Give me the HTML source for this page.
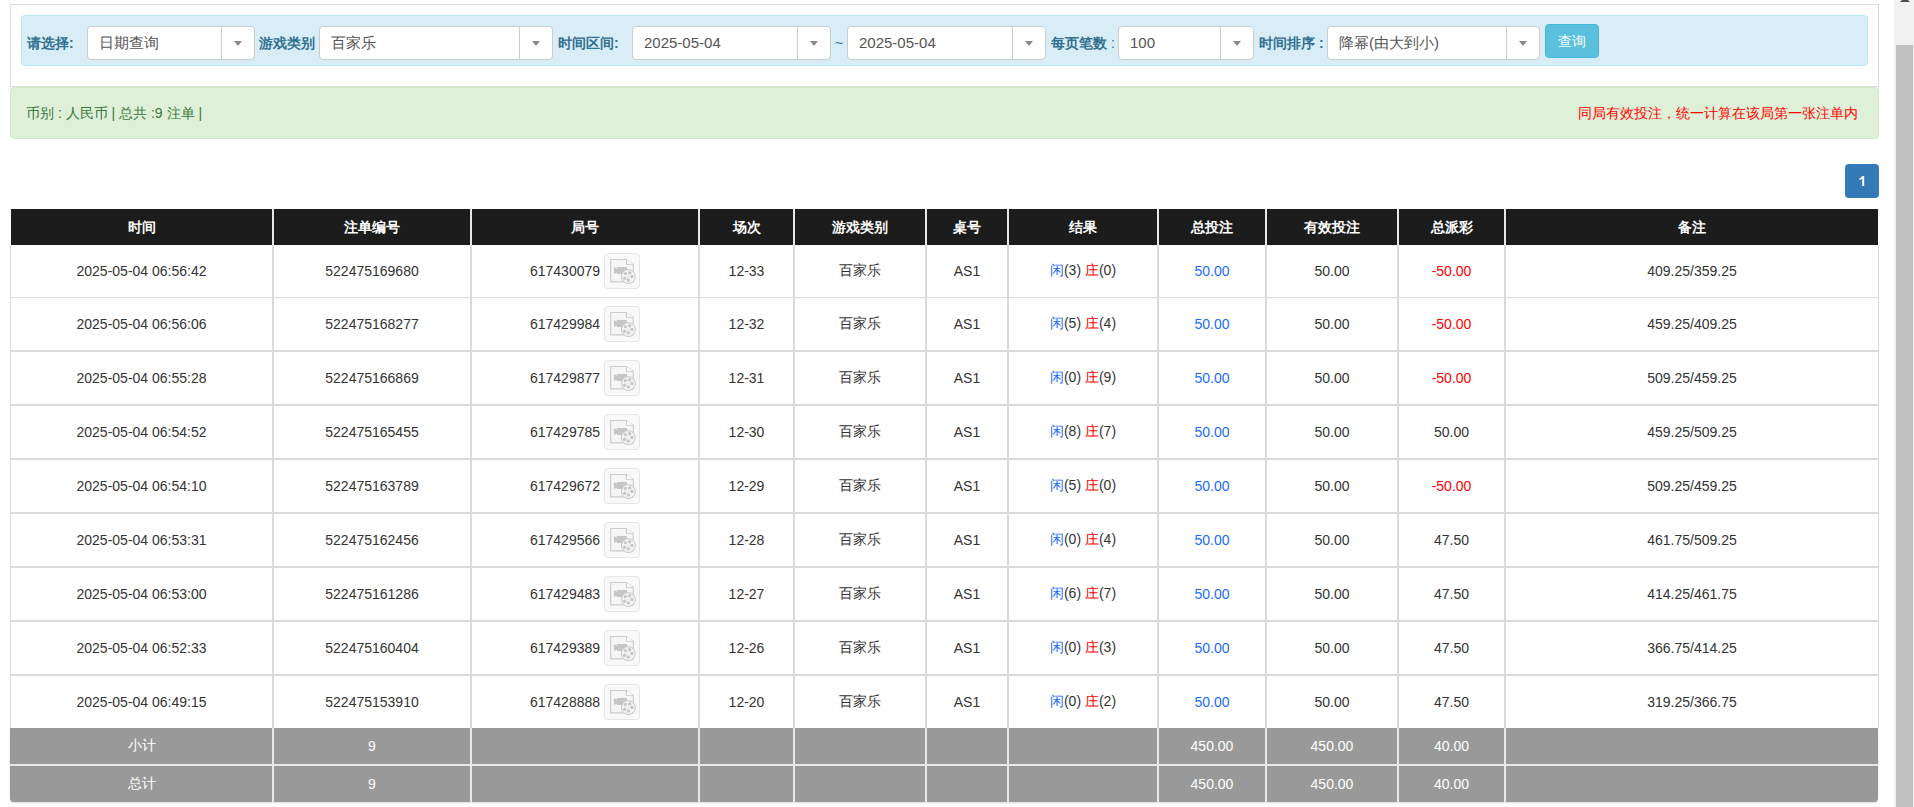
<!DOCTYPE html>
<html><head><meta charset="utf-8">
<style>
html,body{margin:0;padding:0;background:#fff;overflow:hidden}
body{width:1914px;height:807px;position:relative;font-family:"Liberation Sans",sans-serif;font-size:14px;color:#333}
.a{position:absolute;box-sizing:border-box}
.panel{left:10px;top:4px;width:1869px;height:83px;border:1px solid #dcdcdc;background:#fff}
.info{left:21px;top:15px;width:1847px;height:51px;background:#d9edf7;border:1px solid #bce8f1;border-radius:4px}
.succ{left:10px;top:87px;width:1869px;height:52px;background:#dff0d8;border:1px solid #d6e9c6;border-radius:4px}
.lbl{position:absolute;top:33px;line-height:20px;font-weight:bold;color:#31708f;white-space:nowrap}
.lbl i{font-style:normal;font-weight:normal}
.sel{position:absolute;top:26px;height:34px;box-sizing:border-box;background:#fff;border:1px solid #ccc;border-radius:4px;font-size:15px;color:#555;line-height:32px;padding-left:11px;white-space:nowrap}
.sel .dv{position:absolute;top:0;bottom:0;right:32px;width:1px;background:#ccc}
.sel .ar{position:absolute;top:14px;right:12px;width:0;height:0;border-left:4px solid transparent;border-right:4px solid transparent;border-top:5px solid #888}
.btn{position:absolute;left:1545px;top:24px;width:54px;height:34px;box-sizing:border-box;background:#5bc0de;border:1px solid #46b8da;border-radius:4px;color:#fff;text-align:center;line-height:32px;font-size:14px}
.msg{position:absolute;top:103px;line-height:20px;white-space:nowrap}
.pg{left:1845px;top:164px;width:34px;height:34px;background:#337ab7;border-radius:4px;color:#fff;text-align:center;line-height:34px;font-weight:normal}
.c{position:absolute;display:flex;align-items:center;justify-content:center;white-space:nowrap;box-sizing:border-box}
.h{color:#fff;font-weight:bold;padding-top:2px}
.f{color:#fff}
.hdr{position:absolute;background:#1c1c1c}
.ftr{position:absolute;background:#999;border-radius:0 0 4px 4px;box-shadow:0 1px 2px rgba(0,0,0,.15)}
.ln{position:absolute;background:#dadada}
.lnh{position:absolute;background:#e8e8e8}
.lnf{position:absolute;background:#e8e8e8}
.bl{color:#1a6cff}
.rd{color:#ff0000}
.jh{display:inline-flex;align-items:center;font-weight:normal}
.ic{display:block;width:36px;height:36px;margin-left:4px;box-sizing:border-box;border:1px solid #e6e6e6;border-radius:4px;background:#f9f9f9;position:relative}
.ic svg{position:absolute;left:-1px;top:-1px}
.sb{position:absolute;left:1894px;top:0;width:20px;height:807px;background:#f1f1f1}
.th{position:absolute;left:1896px;top:45px;width:17px;height:770px;background:#c1c1c1}
.up{position:absolute;left:1900px;top:-3px;width:0;height:0;border-left:5px solid transparent;border-right:5px solid transparent;border-bottom:5px solid #505050}
</style></head><body>
<div class="a panel"></div>
<div class="a info"></div>
<div class="lbl" style="left:27px">请选择:</div>
<div class="sel" style="left:87px;width:168px">日期查询<span class="dv"></span><span class="ar"></span></div>
<div class="lbl" style="left:259px">游戏类别</div>
<div class="sel" style="left:319px;width:234px">百家乐<span class="dv"></span><span class="ar"></span></div>
<div class="lbl" style="left:558px">时间区间:</div>
<div class="sel" style="left:632px;width:199px">2025-05-04<span class="dv"></span><span class="ar"></span></div>
<div class="lbl" style="left:835px;font-weight:normal">~</div>
<div class="sel" style="left:847px;width:199px">2025-05-04<span class="dv"></span><span class="ar"></span></div>
<div class="lbl" style="left:1051px">每页笔数<i> :</i></div>
<div class="sel" style="left:1118px;width:136px">100<span class="dv"></span><span class="ar"></span></div>
<div class="lbl" style="left:1259px">时间排序 :</div>
<div class="sel" style="left:1327px;width:213px">降幂(由大到小)<span class="dv"></span><span class="ar"></span></div>
<div class="btn">查询</div>
<div class="a succ"></div>
<div class="msg" style="left:26px;color:#3c763d">币别 : 人民币 | 总共 :9 注单 |</div>
<div class="msg" style="left:1578px;color:#ff0000">同局有效投注，统一计算在该局第一张注单内</div>
<div class="a pg"><svg style="position:absolute;left:14px;top:11px" width="8" height="12" viewBox="0 0 8 12"><path d="M3.2 1h2v10h-2V3.8Q2.2 4.6 0.4 5.1V3.6Q2.2 2.9 3.2 1Z" fill="#fff"/></svg></div>
<div class="hdr" style="left:11px;top:209px;width:1867px;height:36px"></div>
<div class="c h" style="left:11px;top:209px;width:261px;height:36px"><span>时间</span></div>
<div class="c h" style="left:274px;top:209px;width:196px;height:36px"><span>注单编号</span></div>
<div class="c h" style="left:472px;top:209px;width:226px;height:36px"><span>局号</span></div>
<div class="c h" style="left:700px;top:209px;width:93px;height:36px"><span>场次</span></div>
<div class="c h" style="left:795px;top:209px;width:130px;height:36px"><span>游戏类别</span></div>
<div class="c h" style="left:927px;top:209px;width:80px;height:36px"><span>桌号</span></div>
<div class="c h" style="left:1009px;top:209px;width:148px;height:36px"><span>结果</span></div>
<div class="c h" style="left:1159px;top:209px;width:106px;height:36px"><span>总投注</span></div>
<div class="c h" style="left:1267px;top:209px;width:130px;height:36px"><span>有效投注</span></div>
<div class="c h" style="left:1399px;top:209px;width:105px;height:36px"><span>总派彩</span></div>
<div class="c h" style="left:1506px;top:209px;width:372px;height:36px"><span>备注</span></div>
<div class="c b" style="left:11px;top:245px;width:261px;height:52px"><span>2025-05-04 06:56:42</span></div>
<div class="c b" style="left:274px;top:245px;width:196px;height:52px"><span>522475169680</span></div>
<div class="c b" style="left:472px;top:245px;width:226px;height:52px"><span><b class="jh">617430079<span class="ic"><svg width="36" height="36" viewBox="0 0 36 36"><path d="M6.7 6.5H22.4L29.3 11.5V28.9H6.7Z" fill="#f6f6f6" stroke="#cbcbcb" stroke-width="1.1"/><path d="M22.4 6.5V11.3H29.3" fill="#fff" stroke="#cbcbcb" stroke-width="1"/><path d="M10 14.2L12.9 15.4V14H23V20.1H18.3V21H12.9V19.6L10 21Z" fill="#c6c6c6"/><circle cx="24.35" cy="23.55" r="7" fill="#f4f4f4" stroke="#c8c8c8" stroke-width="1"/><circle cx="21.4" cy="20.6" r="1.7" fill="#c8c8c8"/><circle cx="25.7" cy="19.7" r="1.7" fill="#c8c8c8"/><circle cx="27.9" cy="23.5" r="1.7" fill="#c8c8c8"/><circle cx="24.3" cy="27" r="1.7" fill="#c8c8c8"/><circle cx="20.6" cy="25.2" r="1.7" fill="#c8c8c8"/><circle cx="23.9" cy="23.4" r=".5" fill="#c8c8c8"/></svg></span></b></span></div>
<div class="c b" style="left:700px;top:245px;width:93px;height:52px"><span>12-33</span></div>
<div class="c b" style="left:795px;top:245px;width:130px;height:52px"><span>百家乐</span></div>
<div class="c b" style="left:927px;top:245px;width:80px;height:52px"><span>AS1</span></div>
<div class="c b" style="left:1009px;top:245px;width:148px;height:52px"><span><span class="bl">闲</span>(3) <span class="rd">庄</span>(0)</span></div>
<div class="c b" style="left:1159px;top:245px;width:106px;height:52px"><span><span class="bl">50.00</span></span></div>
<div class="c b" style="left:1267px;top:245px;width:130px;height:52px"><span>50.00</span></div>
<div class="c b" style="left:1399px;top:245px;width:105px;height:52px"><span><span class="rd">-50.00</span></span></div>
<div class="c b" style="left:1506px;top:245px;width:372px;height:52px"><span>409.25/359.25</span></div>
<div class="c b" style="left:11px;top:298px;width:261px;height:52px"><span>2025-05-04 06:56:06</span></div>
<div class="c b" style="left:274px;top:298px;width:196px;height:52px"><span>522475168277</span></div>
<div class="c b" style="left:472px;top:298px;width:226px;height:52px"><span><b class="jh">617429984<span class="ic"><svg width="36" height="36" viewBox="0 0 36 36"><path d="M6.7 6.5H22.4L29.3 11.5V28.9H6.7Z" fill="#f6f6f6" stroke="#cbcbcb" stroke-width="1.1"/><path d="M22.4 6.5V11.3H29.3" fill="#fff" stroke="#cbcbcb" stroke-width="1"/><path d="M10 14.2L12.9 15.4V14H23V20.1H18.3V21H12.9V19.6L10 21Z" fill="#c6c6c6"/><circle cx="24.35" cy="23.55" r="7" fill="#f4f4f4" stroke="#c8c8c8" stroke-width="1"/><circle cx="21.4" cy="20.6" r="1.7" fill="#c8c8c8"/><circle cx="25.7" cy="19.7" r="1.7" fill="#c8c8c8"/><circle cx="27.9" cy="23.5" r="1.7" fill="#c8c8c8"/><circle cx="24.3" cy="27" r="1.7" fill="#c8c8c8"/><circle cx="20.6" cy="25.2" r="1.7" fill="#c8c8c8"/><circle cx="23.9" cy="23.4" r=".5" fill="#c8c8c8"/></svg></span></b></span></div>
<div class="c b" style="left:700px;top:298px;width:93px;height:52px"><span>12-32</span></div>
<div class="c b" style="left:795px;top:298px;width:130px;height:52px"><span>百家乐</span></div>
<div class="c b" style="left:927px;top:298px;width:80px;height:52px"><span>AS1</span></div>
<div class="c b" style="left:1009px;top:298px;width:148px;height:52px"><span><span class="bl">闲</span>(5) <span class="rd">庄</span>(4)</span></div>
<div class="c b" style="left:1159px;top:298px;width:106px;height:52px"><span><span class="bl">50.00</span></span></div>
<div class="c b" style="left:1267px;top:298px;width:130px;height:52px"><span>50.00</span></div>
<div class="c b" style="left:1399px;top:298px;width:105px;height:52px"><span><span class="rd">-50.00</span></span></div>
<div class="c b" style="left:1506px;top:298px;width:372px;height:52px"><span>459.25/409.25</span></div>
<div class="c b" style="left:11px;top:352px;width:261px;height:52px"><span>2025-05-04 06:55:28</span></div>
<div class="c b" style="left:274px;top:352px;width:196px;height:52px"><span>522475166869</span></div>
<div class="c b" style="left:472px;top:352px;width:226px;height:52px"><span><b class="jh">617429877<span class="ic"><svg width="36" height="36" viewBox="0 0 36 36"><path d="M6.7 6.5H22.4L29.3 11.5V28.9H6.7Z" fill="#f6f6f6" stroke="#cbcbcb" stroke-width="1.1"/><path d="M22.4 6.5V11.3H29.3" fill="#fff" stroke="#cbcbcb" stroke-width="1"/><path d="M10 14.2L12.9 15.4V14H23V20.1H18.3V21H12.9V19.6L10 21Z" fill="#c6c6c6"/><circle cx="24.35" cy="23.55" r="7" fill="#f4f4f4" stroke="#c8c8c8" stroke-width="1"/><circle cx="21.4" cy="20.6" r="1.7" fill="#c8c8c8"/><circle cx="25.7" cy="19.7" r="1.7" fill="#c8c8c8"/><circle cx="27.9" cy="23.5" r="1.7" fill="#c8c8c8"/><circle cx="24.3" cy="27" r="1.7" fill="#c8c8c8"/><circle cx="20.6" cy="25.2" r="1.7" fill="#c8c8c8"/><circle cx="23.9" cy="23.4" r=".5" fill="#c8c8c8"/></svg></span></b></span></div>
<div class="c b" style="left:700px;top:352px;width:93px;height:52px"><span>12-31</span></div>
<div class="c b" style="left:795px;top:352px;width:130px;height:52px"><span>百家乐</span></div>
<div class="c b" style="left:927px;top:352px;width:80px;height:52px"><span>AS1</span></div>
<div class="c b" style="left:1009px;top:352px;width:148px;height:52px"><span><span class="bl">闲</span>(0) <span class="rd">庄</span>(9)</span></div>
<div class="c b" style="left:1159px;top:352px;width:106px;height:52px"><span><span class="bl">50.00</span></span></div>
<div class="c b" style="left:1267px;top:352px;width:130px;height:52px"><span>50.00</span></div>
<div class="c b" style="left:1399px;top:352px;width:105px;height:52px"><span><span class="rd">-50.00</span></span></div>
<div class="c b" style="left:1506px;top:352px;width:372px;height:52px"><span>509.25/459.25</span></div>
<div class="c b" style="left:11px;top:406px;width:261px;height:52px"><span>2025-05-04 06:54:52</span></div>
<div class="c b" style="left:274px;top:406px;width:196px;height:52px"><span>522475165455</span></div>
<div class="c b" style="left:472px;top:406px;width:226px;height:52px"><span><b class="jh">617429785<span class="ic"><svg width="36" height="36" viewBox="0 0 36 36"><path d="M6.7 6.5H22.4L29.3 11.5V28.9H6.7Z" fill="#f6f6f6" stroke="#cbcbcb" stroke-width="1.1"/><path d="M22.4 6.5V11.3H29.3" fill="#fff" stroke="#cbcbcb" stroke-width="1"/><path d="M10 14.2L12.9 15.4V14H23V20.1H18.3V21H12.9V19.6L10 21Z" fill="#c6c6c6"/><circle cx="24.35" cy="23.55" r="7" fill="#f4f4f4" stroke="#c8c8c8" stroke-width="1"/><circle cx="21.4" cy="20.6" r="1.7" fill="#c8c8c8"/><circle cx="25.7" cy="19.7" r="1.7" fill="#c8c8c8"/><circle cx="27.9" cy="23.5" r="1.7" fill="#c8c8c8"/><circle cx="24.3" cy="27" r="1.7" fill="#c8c8c8"/><circle cx="20.6" cy="25.2" r="1.7" fill="#c8c8c8"/><circle cx="23.9" cy="23.4" r=".5" fill="#c8c8c8"/></svg></span></b></span></div>
<div class="c b" style="left:700px;top:406px;width:93px;height:52px"><span>12-30</span></div>
<div class="c b" style="left:795px;top:406px;width:130px;height:52px"><span>百家乐</span></div>
<div class="c b" style="left:927px;top:406px;width:80px;height:52px"><span>AS1</span></div>
<div class="c b" style="left:1009px;top:406px;width:148px;height:52px"><span><span class="bl">闲</span>(8) <span class="rd">庄</span>(7)</span></div>
<div class="c b" style="left:1159px;top:406px;width:106px;height:52px"><span><span class="bl">50.00</span></span></div>
<div class="c b" style="left:1267px;top:406px;width:130px;height:52px"><span>50.00</span></div>
<div class="c b" style="left:1399px;top:406px;width:105px;height:52px"><span><span class="">50.00</span></span></div>
<div class="c b" style="left:1506px;top:406px;width:372px;height:52px"><span>459.25/509.25</span></div>
<div class="c b" style="left:11px;top:460px;width:261px;height:52px"><span>2025-05-04 06:54:10</span></div>
<div class="c b" style="left:274px;top:460px;width:196px;height:52px"><span>522475163789</span></div>
<div class="c b" style="left:472px;top:460px;width:226px;height:52px"><span><b class="jh">617429672<span class="ic"><svg width="36" height="36" viewBox="0 0 36 36"><path d="M6.7 6.5H22.4L29.3 11.5V28.9H6.7Z" fill="#f6f6f6" stroke="#cbcbcb" stroke-width="1.1"/><path d="M22.4 6.5V11.3H29.3" fill="#fff" stroke="#cbcbcb" stroke-width="1"/><path d="M10 14.2L12.9 15.4V14H23V20.1H18.3V21H12.9V19.6L10 21Z" fill="#c6c6c6"/><circle cx="24.35" cy="23.55" r="7" fill="#f4f4f4" stroke="#c8c8c8" stroke-width="1"/><circle cx="21.4" cy="20.6" r="1.7" fill="#c8c8c8"/><circle cx="25.7" cy="19.7" r="1.7" fill="#c8c8c8"/><circle cx="27.9" cy="23.5" r="1.7" fill="#c8c8c8"/><circle cx="24.3" cy="27" r="1.7" fill="#c8c8c8"/><circle cx="20.6" cy="25.2" r="1.7" fill="#c8c8c8"/><circle cx="23.9" cy="23.4" r=".5" fill="#c8c8c8"/></svg></span></b></span></div>
<div class="c b" style="left:700px;top:460px;width:93px;height:52px"><span>12-29</span></div>
<div class="c b" style="left:795px;top:460px;width:130px;height:52px"><span>百家乐</span></div>
<div class="c b" style="left:927px;top:460px;width:80px;height:52px"><span>AS1</span></div>
<div class="c b" style="left:1009px;top:460px;width:148px;height:52px"><span><span class="bl">闲</span>(5) <span class="rd">庄</span>(0)</span></div>
<div class="c b" style="left:1159px;top:460px;width:106px;height:52px"><span><span class="bl">50.00</span></span></div>
<div class="c b" style="left:1267px;top:460px;width:130px;height:52px"><span>50.00</span></div>
<div class="c b" style="left:1399px;top:460px;width:105px;height:52px"><span><span class="rd">-50.00</span></span></div>
<div class="c b" style="left:1506px;top:460px;width:372px;height:52px"><span>509.25/459.25</span></div>
<div class="c b" style="left:11px;top:514px;width:261px;height:52px"><span>2025-05-04 06:53:31</span></div>
<div class="c b" style="left:274px;top:514px;width:196px;height:52px"><span>522475162456</span></div>
<div class="c b" style="left:472px;top:514px;width:226px;height:52px"><span><b class="jh">617429566<span class="ic"><svg width="36" height="36" viewBox="0 0 36 36"><path d="M6.7 6.5H22.4L29.3 11.5V28.9H6.7Z" fill="#f6f6f6" stroke="#cbcbcb" stroke-width="1.1"/><path d="M22.4 6.5V11.3H29.3" fill="#fff" stroke="#cbcbcb" stroke-width="1"/><path d="M10 14.2L12.9 15.4V14H23V20.1H18.3V21H12.9V19.6L10 21Z" fill="#c6c6c6"/><circle cx="24.35" cy="23.55" r="7" fill="#f4f4f4" stroke="#c8c8c8" stroke-width="1"/><circle cx="21.4" cy="20.6" r="1.7" fill="#c8c8c8"/><circle cx="25.7" cy="19.7" r="1.7" fill="#c8c8c8"/><circle cx="27.9" cy="23.5" r="1.7" fill="#c8c8c8"/><circle cx="24.3" cy="27" r="1.7" fill="#c8c8c8"/><circle cx="20.6" cy="25.2" r="1.7" fill="#c8c8c8"/><circle cx="23.9" cy="23.4" r=".5" fill="#c8c8c8"/></svg></span></b></span></div>
<div class="c b" style="left:700px;top:514px;width:93px;height:52px"><span>12-28</span></div>
<div class="c b" style="left:795px;top:514px;width:130px;height:52px"><span>百家乐</span></div>
<div class="c b" style="left:927px;top:514px;width:80px;height:52px"><span>AS1</span></div>
<div class="c b" style="left:1009px;top:514px;width:148px;height:52px"><span><span class="bl">闲</span>(0) <span class="rd">庄</span>(4)</span></div>
<div class="c b" style="left:1159px;top:514px;width:106px;height:52px"><span><span class="bl">50.00</span></span></div>
<div class="c b" style="left:1267px;top:514px;width:130px;height:52px"><span>50.00</span></div>
<div class="c b" style="left:1399px;top:514px;width:105px;height:52px"><span><span class="">47.50</span></span></div>
<div class="c b" style="left:1506px;top:514px;width:372px;height:52px"><span>461.75/509.25</span></div>
<div class="c b" style="left:11px;top:568px;width:261px;height:52px"><span>2025-05-04 06:53:00</span></div>
<div class="c b" style="left:274px;top:568px;width:196px;height:52px"><span>522475161286</span></div>
<div class="c b" style="left:472px;top:568px;width:226px;height:52px"><span><b class="jh">617429483<span class="ic"><svg width="36" height="36" viewBox="0 0 36 36"><path d="M6.7 6.5H22.4L29.3 11.5V28.9H6.7Z" fill="#f6f6f6" stroke="#cbcbcb" stroke-width="1.1"/><path d="M22.4 6.5V11.3H29.3" fill="#fff" stroke="#cbcbcb" stroke-width="1"/><path d="M10 14.2L12.9 15.4V14H23V20.1H18.3V21H12.9V19.6L10 21Z" fill="#c6c6c6"/><circle cx="24.35" cy="23.55" r="7" fill="#f4f4f4" stroke="#c8c8c8" stroke-width="1"/><circle cx="21.4" cy="20.6" r="1.7" fill="#c8c8c8"/><circle cx="25.7" cy="19.7" r="1.7" fill="#c8c8c8"/><circle cx="27.9" cy="23.5" r="1.7" fill="#c8c8c8"/><circle cx="24.3" cy="27" r="1.7" fill="#c8c8c8"/><circle cx="20.6" cy="25.2" r="1.7" fill="#c8c8c8"/><circle cx="23.9" cy="23.4" r=".5" fill="#c8c8c8"/></svg></span></b></span></div>
<div class="c b" style="left:700px;top:568px;width:93px;height:52px"><span>12-27</span></div>
<div class="c b" style="left:795px;top:568px;width:130px;height:52px"><span>百家乐</span></div>
<div class="c b" style="left:927px;top:568px;width:80px;height:52px"><span>AS1</span></div>
<div class="c b" style="left:1009px;top:568px;width:148px;height:52px"><span><span class="bl">闲</span>(6) <span class="rd">庄</span>(7)</span></div>
<div class="c b" style="left:1159px;top:568px;width:106px;height:52px"><span><span class="bl">50.00</span></span></div>
<div class="c b" style="left:1267px;top:568px;width:130px;height:52px"><span>50.00</span></div>
<div class="c b" style="left:1399px;top:568px;width:105px;height:52px"><span><span class="">47.50</span></span></div>
<div class="c b" style="left:1506px;top:568px;width:372px;height:52px"><span>414.25/461.75</span></div>
<div class="c b" style="left:11px;top:622px;width:261px;height:52px"><span>2025-05-04 06:52:33</span></div>
<div class="c b" style="left:274px;top:622px;width:196px;height:52px"><span>522475160404</span></div>
<div class="c b" style="left:472px;top:622px;width:226px;height:52px"><span><b class="jh">617429389<span class="ic"><svg width="36" height="36" viewBox="0 0 36 36"><path d="M6.7 6.5H22.4L29.3 11.5V28.9H6.7Z" fill="#f6f6f6" stroke="#cbcbcb" stroke-width="1.1"/><path d="M22.4 6.5V11.3H29.3" fill="#fff" stroke="#cbcbcb" stroke-width="1"/><path d="M10 14.2L12.9 15.4V14H23V20.1H18.3V21H12.9V19.6L10 21Z" fill="#c6c6c6"/><circle cx="24.35" cy="23.55" r="7" fill="#f4f4f4" stroke="#c8c8c8" stroke-width="1"/><circle cx="21.4" cy="20.6" r="1.7" fill="#c8c8c8"/><circle cx="25.7" cy="19.7" r="1.7" fill="#c8c8c8"/><circle cx="27.9" cy="23.5" r="1.7" fill="#c8c8c8"/><circle cx="24.3" cy="27" r="1.7" fill="#c8c8c8"/><circle cx="20.6" cy="25.2" r="1.7" fill="#c8c8c8"/><circle cx="23.9" cy="23.4" r=".5" fill="#c8c8c8"/></svg></span></b></span></div>
<div class="c b" style="left:700px;top:622px;width:93px;height:52px"><span>12-26</span></div>
<div class="c b" style="left:795px;top:622px;width:130px;height:52px"><span>百家乐</span></div>
<div class="c b" style="left:927px;top:622px;width:80px;height:52px"><span>AS1</span></div>
<div class="c b" style="left:1009px;top:622px;width:148px;height:52px"><span><span class="bl">闲</span>(0) <span class="rd">庄</span>(3)</span></div>
<div class="c b" style="left:1159px;top:622px;width:106px;height:52px"><span><span class="bl">50.00</span></span></div>
<div class="c b" style="left:1267px;top:622px;width:130px;height:52px"><span>50.00</span></div>
<div class="c b" style="left:1399px;top:622px;width:105px;height:52px"><span><span class="">47.50</span></span></div>
<div class="c b" style="left:1506px;top:622px;width:372px;height:52px"><span>366.75/414.25</span></div>
<div class="c b" style="left:11px;top:676px;width:261px;height:52px"><span>2025-05-04 06:49:15</span></div>
<div class="c b" style="left:274px;top:676px;width:196px;height:52px"><span>522475153910</span></div>
<div class="c b" style="left:472px;top:676px;width:226px;height:52px"><span><b class="jh">617428888<span class="ic"><svg width="36" height="36" viewBox="0 0 36 36"><path d="M6.7 6.5H22.4L29.3 11.5V28.9H6.7Z" fill="#f6f6f6" stroke="#cbcbcb" stroke-width="1.1"/><path d="M22.4 6.5V11.3H29.3" fill="#fff" stroke="#cbcbcb" stroke-width="1"/><path d="M10 14.2L12.9 15.4V14H23V20.1H18.3V21H12.9V19.6L10 21Z" fill="#c6c6c6"/><circle cx="24.35" cy="23.55" r="7" fill="#f4f4f4" stroke="#c8c8c8" stroke-width="1"/><circle cx="21.4" cy="20.6" r="1.7" fill="#c8c8c8"/><circle cx="25.7" cy="19.7" r="1.7" fill="#c8c8c8"/><circle cx="27.9" cy="23.5" r="1.7" fill="#c8c8c8"/><circle cx="24.3" cy="27" r="1.7" fill="#c8c8c8"/><circle cx="20.6" cy="25.2" r="1.7" fill="#c8c8c8"/><circle cx="23.9" cy="23.4" r=".5" fill="#c8c8c8"/></svg></span></b></span></div>
<div class="c b" style="left:700px;top:676px;width:93px;height:52px"><span>12-20</span></div>
<div class="c b" style="left:795px;top:676px;width:130px;height:52px"><span>百家乐</span></div>
<div class="c b" style="left:927px;top:676px;width:80px;height:52px"><span>AS1</span></div>
<div class="c b" style="left:1009px;top:676px;width:148px;height:52px"><span><span class="bl">闲</span>(0) <span class="rd">庄</span>(2)</span></div>
<div class="c b" style="left:1159px;top:676px;width:106px;height:52px"><span><span class="bl">50.00</span></span></div>
<div class="c b" style="left:1267px;top:676px;width:130px;height:52px"><span>50.00</span></div>
<div class="c b" style="left:1399px;top:676px;width:105px;height:52px"><span><span class="">47.50</span></span></div>
<div class="c b" style="left:1506px;top:676px;width:372px;height:52px"><span>319.25/366.75</span></div>
<div class="ln" style="left:10px;top:297px;width:1869px;height:1px"></div>
<div class="ln" style="left:10px;top:350px;width:1869px;height:2px"></div>
<div class="ln" style="left:10px;top:404px;width:1869px;height:2px"></div>
<div class="ln" style="left:10px;top:458px;width:1869px;height:2px"></div>
<div class="ln" style="left:10px;top:512px;width:1869px;height:2px"></div>
<div class="ln" style="left:10px;top:566px;width:1869px;height:2px"></div>
<div class="ln" style="left:10px;top:620px;width:1869px;height:2px"></div>
<div class="ln" style="left:10px;top:674px;width:1869px;height:2px"></div>
<div class="ln" style="left:10px;top:245px;width:1px;height:483px"></div>
<div class="ln" style="left:1878px;top:245px;width:1px;height:483px"></div>
<div class="ln" style="left:272px;top:245px;width:2px;height:483px"></div>
<div class="lnh" style="left:272px;top:209px;width:2px;height:36px"></div>
<div class="ln" style="left:470px;top:245px;width:2px;height:483px"></div>
<div class="lnh" style="left:470px;top:209px;width:2px;height:36px"></div>
<div class="ln" style="left:698px;top:245px;width:2px;height:483px"></div>
<div class="lnh" style="left:698px;top:209px;width:2px;height:36px"></div>
<div class="ln" style="left:793px;top:245px;width:2px;height:483px"></div>
<div class="lnh" style="left:793px;top:209px;width:2px;height:36px"></div>
<div class="ln" style="left:925px;top:245px;width:2px;height:483px"></div>
<div class="lnh" style="left:925px;top:209px;width:2px;height:36px"></div>
<div class="ln" style="left:1007px;top:245px;width:2px;height:483px"></div>
<div class="lnh" style="left:1007px;top:209px;width:2px;height:36px"></div>
<div class="ln" style="left:1157px;top:245px;width:2px;height:483px"></div>
<div class="lnh" style="left:1157px;top:209px;width:2px;height:36px"></div>
<div class="ln" style="left:1265px;top:245px;width:2px;height:483px"></div>
<div class="lnh" style="left:1265px;top:209px;width:2px;height:36px"></div>
<div class="ln" style="left:1397px;top:245px;width:2px;height:483px"></div>
<div class="lnh" style="left:1397px;top:209px;width:2px;height:36px"></div>
<div class="ln" style="left:1504px;top:245px;width:2px;height:483px"></div>
<div class="lnh" style="left:1504px;top:209px;width:2px;height:36px"></div>
<div class="ftr" style="left:10px;top:728px;width:1868px;height:74px"></div>
<div class="lnf" style="left:10px;top:764px;width:1868px;height:2px"></div>
<div class="lnf" style="left:272px;top:728px;width:2px;height:74px"></div>
<div class="lnf" style="left:470px;top:728px;width:2px;height:74px"></div>
<div class="lnf" style="left:698px;top:728px;width:2px;height:74px"></div>
<div class="lnf" style="left:793px;top:728px;width:2px;height:74px"></div>
<div class="lnf" style="left:925px;top:728px;width:2px;height:74px"></div>
<div class="lnf" style="left:1007px;top:728px;width:2px;height:74px"></div>
<div class="lnf" style="left:1157px;top:728px;width:2px;height:74px"></div>
<div class="lnf" style="left:1265px;top:728px;width:2px;height:74px"></div>
<div class="lnf" style="left:1397px;top:728px;width:2px;height:74px"></div>
<div class="lnf" style="left:1504px;top:728px;width:2px;height:74px"></div>
<div class="c f" style="left:11px;top:728px;width:261px;height:36px"><span>小计</span></div>
<div class="c f" style="left:274px;top:728px;width:196px;height:36px"><span>9</span></div>
<div class="c f" style="left:1159px;top:728px;width:106px;height:36px"><span>450.00</span></div>
<div class="c f" style="left:1267px;top:728px;width:130px;height:36px"><span>450.00</span></div>
<div class="c f" style="left:1399px;top:728px;width:105px;height:36px"><span>40.00</span></div>
<div class="c f" style="left:11px;top:766px;width:261px;height:36px"><span>总计</span></div>
<div class="c f" style="left:274px;top:766px;width:196px;height:36px"><span>9</span></div>
<div class="c f" style="left:1159px;top:766px;width:106px;height:36px"><span>450.00</span></div>
<div class="c f" style="left:1267px;top:766px;width:130px;height:36px"><span>450.00</span></div>
<div class="c f" style="left:1399px;top:766px;width:105px;height:36px"><span>40.00</span></div>

<div class="sb"></div><div class="th"></div><div class="up"></div>
</body></html>
